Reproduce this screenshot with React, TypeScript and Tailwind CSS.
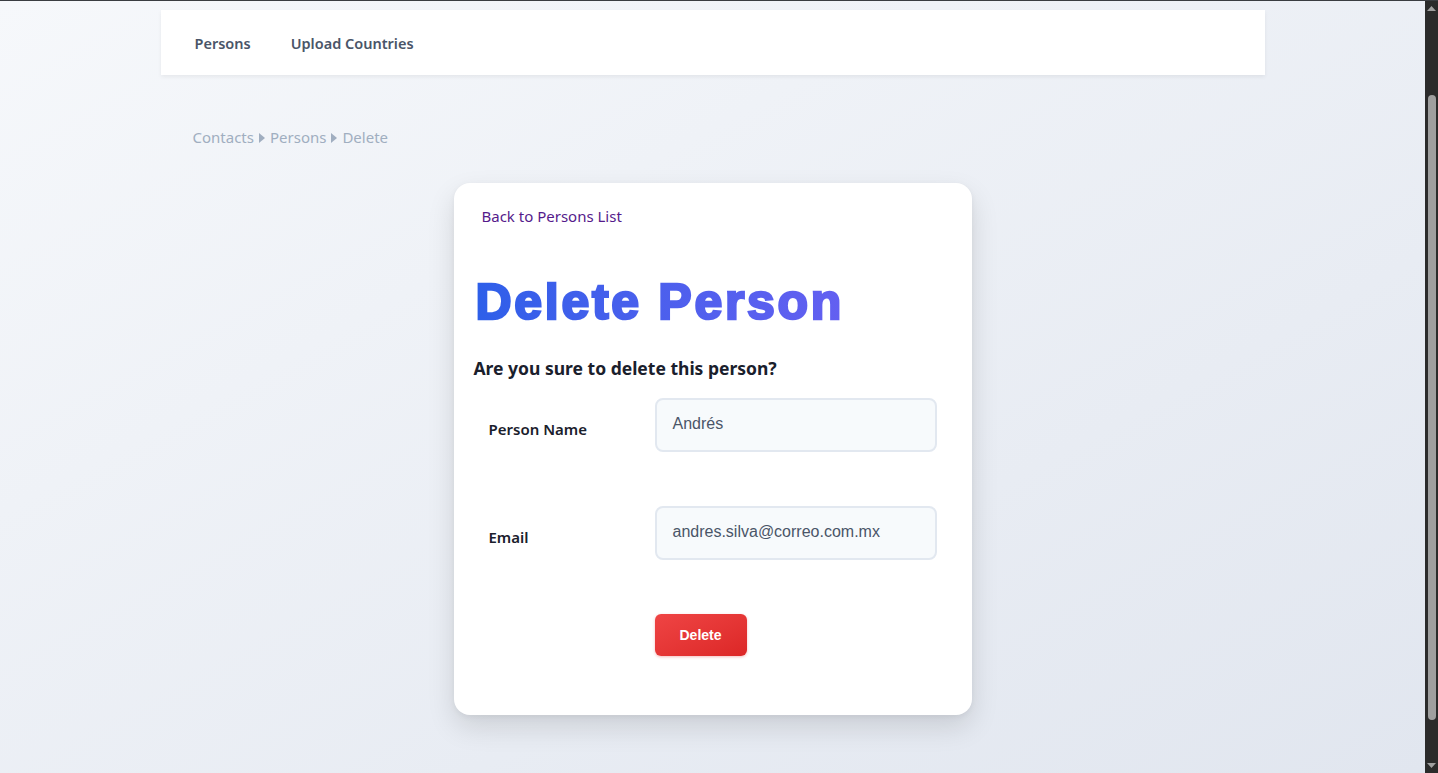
import React from "react";

const ui = { fontFamily: '"Noto Sans", "Open Sans", sans-serif' };
const arial = { fontFamily: '"Liberation Sans", Arial, sans-serif' };

function Caret() {
  return (
    <svg width="6" height="10" viewBox="0 0 6 10" className="mx-[5px] mt-[1px]">
      <path d="M0 0 L6 5 L0 10 Z" fill="#a0aec0" />
    </svg>
  );
}

function Row({ label, value }: { label: string; value: string }) {
  return (
    <div className="flex items-center px-[15px]">
      <label className="w-[166px] pt-[8px] text-[15px] font-semibold text-[#1a202c]" style={ui}>
        {label}
      </label>
      <div className="flex h-[54px] w-[282px] items-center rounded-[8px] border-2 border-[#e2e8f0] bg-[#f7fafc] px-[16px] pb-[3px] text-[16px] text-[#4a5568]" style={arial}>
        {value}
      </div>
    </div>
  );
}

export default function App() {
  return (
    <div className="flex h-[773px] w-full flex-col overflow-hidden border-t border-[#3a3d41] bg-[#2b2b2b]">
      <div className="flex min-h-0 flex-1">
        <div className="flex min-w-0 flex-1 flex-col items-center bg-gradient-to-br from-[#f6f8fb] to-[#e1e6ef]">
          <nav className="mt-[9px] flex h-[65px] w-[1104px] shrink-0 items-center gap-[40px] bg-white px-[34px] pt-[2px] shadow-[0_2px_4px_rgba(0,0,0,0.06)]" style={ui}>
            <span className="text-[14.5px] font-semibold text-[#4a5568]">Persons</span>
            <span className="text-[14.5px] font-semibold text-[#4a5568]">Upload Countries</span>
          </nav>
          <div className="w-[1104px] px-[32px] pt-[51px]">
            <div className="flex items-center text-[15px] text-[#a0aec0]" style={ui}>
              <span>Contacts</span>
              <Caret />
              <span>Persons</span>
              <Caret />
              <span>Delete</span>
            </div>
          </div>
          <div className="mt-[34px] flex h-[532px] w-[518px] shrink-0 flex-col rounded-[16px] bg-white px-[20px] pt-[22px] shadow-[0_12px_28px_rgba(0,0,0,0.12),0_2px_6px_rgba(0,0,0,0.05)]">
            <a className="ml-[8px] text-[15px] text-[#551a8b]" style={ui}>
              Back to Persons List
            </a>
            <h1
              className="mt-[45px] bg-gradient-to-r from-[#2d5fe9] to-[#6f5ff3] bg-clip-text pl-[2px] text-[50px] font-black leading-[60px] tracking-[2.7px] text-transparent [-webkit-text-stroke:2.5px_transparent]"
              style={arial}
            >
              Delete Person
            </h1>
            <h2 className="mt-[23px] text-[17.5px] font-bold text-[#1a202c]" style={ui}>
              Are you sure to delete this person?
            </h2>
            <div className="mt-[17px] flex flex-col gap-[54px]">
              <Row label="Person Name" value="Andrés" />
              <Row label="Email" value="andres.silva@correo.com.mx" />
              <div className="px-[15px] pl-[181px]">
                <button className="h-[42px] w-[92px] rounded-[6px] bg-gradient-to-br from-[#ef4444] to-[#dc2626] text-[14px] font-bold text-white shadow-[0_1px_3px_rgba(220,38,38,0.3)]" style={arial}>
                  Delete
                </button>
              </div>
            </div>
          </div>
        </div>
        <div className="flex w-[13px] shrink-0 flex-col items-center bg-[#2b2b2b]">
          <svg width="9" height="5" viewBox="0 0 9 5" className="mt-[5px]">
            <path d="M0 5 L4.5 0 L9 5 Z" fill="#a0a0a0" />
          </svg>
          <div className="mt-[84px] h-[625px] w-[8px] rounded-[4px] bg-[#9f9f9f]" />
          <div className="flex-1" />
          <svg width="9" height="5" viewBox="0 0 9 5" className="mb-[5px]">
            <path d="M0 0 L4.5 5 L9 0 Z" fill="#a0a0a0" />
          </svg>
        </div>
      </div>
    </div>
  );
}
